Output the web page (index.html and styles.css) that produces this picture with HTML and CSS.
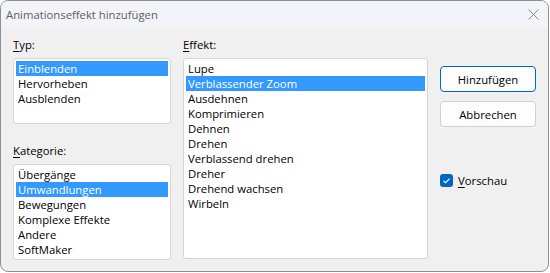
FILE: index.html
```html
<!DOCTYPE html>
<html lang="de">
<head>
<meta charset="utf-8">
<title>Animationseffekt hinzufügen</title>
<link rel="stylesheet" href="styles.css">
</head>
<body>
<div class="window">
  <div class="titlebar">
    <span class="title">Animationseffekt hinzufügen</span>
    <svg class="close" width="11" height="11" viewBox="0 0 11 11"><path d="M0.5 0.5 L10.5 10.5 M10.5 0.5 L0.5 10.5" stroke="#8a8a8a" stroke-width="1" fill="none"/></svg>
  </div>
  <div class="content">
    <div class="col-left">
      <div class="label"><u>T</u>yp:</div>
      <ul class="list list-typ">
        <li class="sel">Einblenden</li>
        <li>Hervorheben</li>
        <li>Ausblenden</li>
      </ul>
      <div class="label label-kat"><u>K</u>ategorie:</div>
      <ul class="list list-kat">
        <li>Übergänge</li>
        <li class="sel">Umwandlungen</li>
        <li>Bewegungen</li>
        <li>Komplexe Effekte</li>
        <li>Andere</li>
        <li>SoftMaker</li>
      </ul>
    </div>
    <div class="col-mid">
      <div class="label"><u>E</u>ffekt:</div>
      <ul class="list list-eff">
        <li>Lupe</li>
        <li class="sel">Verblassender Zoom</li>
        <li>Ausdehnen</li>
        <li>Komprimieren</li>
        <li>Dehnen</li>
        <li>Drehen</li>
        <li>Verblassend drehen</li>
        <li>Dreher</li>
        <li>Drehend wachsen</li>
        <li>Wirbeln</li>
      </ul>
    </div>
    <div class="col-right">
      <button class="btn btn-default">Hinzufügen</button>
      <button class="btn">Abbrechen</button>
      <label class="check">
        <span class="box"><svg width="13" height="13" viewBox="0 0 13 13"><path d="M3.5 6.8 L5.6 8.7 L9.6 4.6" stroke="#fff" stroke-width="1.1" fill="none"/></svg></span>
        <span><u>V</u>orschau</span>
      </label>
    </div>
  </div>
</div>
</body>
</html>
```
FILE: styles.css
```css
html, body {
  margin: 0;
  padding: 0;
  background: #ffffff;
}
body {
  font-family: "Open Sans", "Noto Sans", sans-serif;
  font-size: 11.3px;
  color: #000;
}
.window {
  box-sizing: border-box;
  width: 549px;
  height: 272px;
  border: 1px solid #8f8f8f;
  border-radius: 8px;
  background: #f0f0f0;
  overflow: hidden;
  display: flex;
  flex-direction: column;
}
.titlebar {
  height: 26px;
  flex: none;
  background: #f3f4f9;
  display: flex;
  align-items: center;
  justify-content: space-between;
  padding: 0 9px 0 5px;
}
.title {
  color: #606060;
  line-height: 15px;
}
.close {
  display: block;
}
.content {
  display: flex;
  padding: 10px 0 0 12px;
  gap: 12px;
}
.label {
  line-height: 15px;
  height: 15px;
  margin-bottom: 6px;
}
.label u, .check u {
  text-decoration-thickness: 1px;
  text-underline-offset: 2px;
}
.label-kat {
  margin-top: 19px;
}
.list {
  list-style: none;
  margin: 0;
  padding: 2px;
  box-sizing: border-box;
  border: 1px solid #d5d5d5;
  border-radius: 3px;
  background: #fff;
}
.list li {
  height: 15px;
  line-height: 15px;
  padding-left: 2px;
  white-space: nowrap;
}
.list li.sel {
  background: #3399ff;
  color: #fff;
}
.col-left {
  width: 158px;
}
.list-typ {
  height: 66px;
}
.list-kat {
  height: 96px;
}
.col-mid {
  width: 245px;
}
.list-eff {
  height: 201px;
}
.col-right {
  width: 96px;
  display: flex;
  flex-direction: column;
  padding-top: 29px;
}
.btn {
  box-sizing: border-box;
  height: 26px;
  width: 96px;
  margin: 0 0 9px 0;
  border: 1px solid #d0d0d0;
  border-radius: 4px;
  background: #fdfdfd;
  font-family: inherit;
  font-size: 11.3px;
  color: #000;
  padding: 0;
}
.btn-default {
  border-color: #0067c0;
}
.check {
  display: flex;
  align-items: center;
  gap: 5px;
  margin-top: 37px;
  line-height: 15px;
}
.box {
  width: 13px;
  height: 13px;
  border-radius: 3px;
  background: #0067c0;
  display: block;
}
.box svg {
  display: block;
}
```
